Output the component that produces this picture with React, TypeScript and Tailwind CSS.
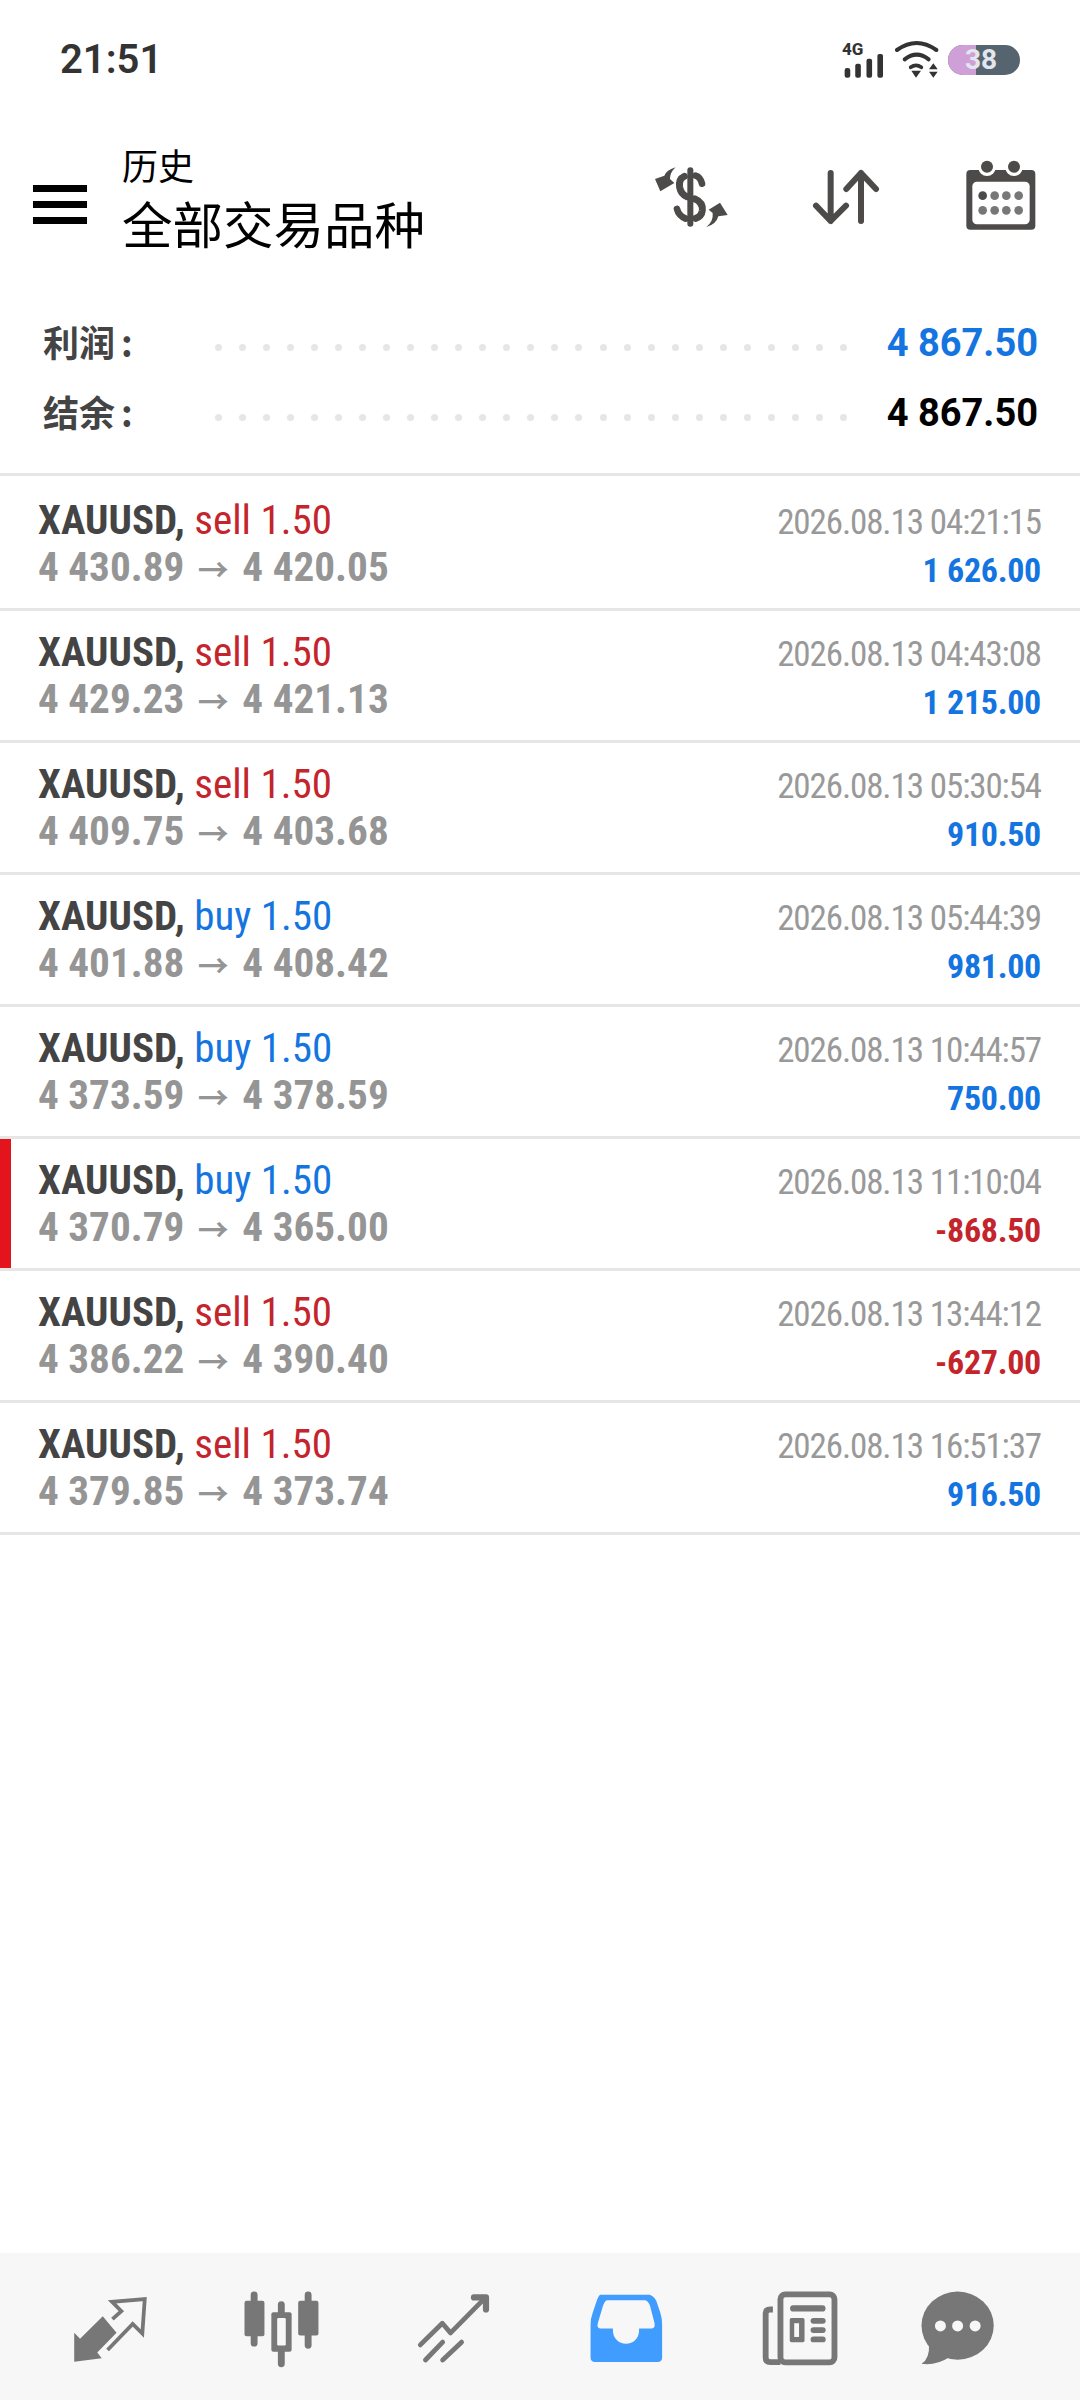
const trades = [
  { side: 'sell', open: '4 430.89', close: '4 420.05', time: '2026.08.13 04:21:15', profit: '1 626.00' },
  { side: 'sell', open: '4 429.23', close: '4 421.13', time: '2026.08.13 04:43:08', profit: '1 215.00' },
  { side: 'sell', open: '4 409.75', close: '4 403.68', time: '2026.08.13 05:30:54', profit: '910.50' },
  { side: 'buy', open: '4 401.88', close: '4 408.42', time: '2026.08.13 05:44:39', profit: '981.00' },
  { side: 'buy', open: '4 373.59', close: '4 378.59', time: '2026.08.13 10:44:57', profit: '750.00' },
  { side: 'buy', open: '4 370.79', close: '4 365.00', time: '2026.08.13 11:10:04', profit: '-868.50', marked: true },
  { side: 'sell', open: '4 386.22', close: '4 390.40', time: '2026.08.13 13:44:12', profit: '-627.00' },
  { side: 'sell', open: '4 379.85', close: '4 373.74', time: '2026.08.13 16:51:37', profit: '916.50' },
];

const cjk = "font-['Noto_Sans_CJK_SC','Noto_Sans',sans-serif]";
const roboto = "font-['Roboto',sans-serif]";
const condensed = "font-['Roboto',sans-serif] [font-stretch:75%]";

function StatusBar() {
  return (
    <div className="h-[120px] pl-[60px] pr-[60px] pt-[37px] flex justify-between items-start">
      <span className={`${roboto} text-[40px] leading-[46px] font-semibold text-[#333]`}>21:51</span>
      <div className="h-[46px] flex items-center">
        <div className="relative w-[43px] h-[37px] mr-[9px]">
          <span className={`absolute left-0 top-[-3px] ${roboto} text-[17px] leading-[20px] font-extrabold text-[#333]`}>4G</span>
          <svg width="43" height="37" viewBox="65 65 130 110" className="absolute left-0 top-0">
            <rect x="73" y="143" width="17" height="29" rx="7" fill="#333" />
            <rect x="105" y="130" width="17" height="42" rx="6" fill="#333" />
            <rect x="139" y="115" width="17" height="57" rx="6" fill="#333" />
            <rect x="172" y="100" width="17" height="72" rx="6" fill="#333" />
          </svg>
        </div>
        <svg width="46" height="40" viewBox="222 60 138 120" className="mr-[8px]">
          <g fill="none" stroke="#333" strokeLinecap="round">
            <path d="M231 90 Q290 48 349 90" strokeWidth="12" />
            <path d="M254 118 Q290 90 326 118" strokeWidth="12" />
            <path d="M272 142 Q288 130 304 142" strokeWidth="11" />
          </g>
          <path d="M274 152 H303 L288 173Z M340 130 L353 148 H327Z M327 155 H353 L340 173Z" fill="#333" />
        </svg>
        <div className="w-[72px] h-[30px] rounded-full flex bg-[#56646f] relative">
          <div className="w-[28px] rounded-l-full bg-[#cf9fd8]" />
          <span className={`absolute left-[17px] top-0 ${roboto} text-[28px] leading-[30px] font-bold text-[#e4e6ee]`}>38</span>
        </div>
      </div>
    </div>
  );
}

function DollarIcon() {
  return (
    <svg width="80" height="80" viewBox="150 480 240 240">
      <g fill="none" stroke="#4d4a4a" strokeLinecap="round">
        <path d="M268 514 V674" strokeWidth="18" />
        <path d="M250 532 Q232 540 236 565 Q240 586 258 593" strokeWidth="21" />
        <path d="M284 530 Q298 534 303 554" strokeWidth="20" />
        <path d="M282 600 Q306 610 304 634 Q302 652 284 658" strokeWidth="21" />
        <path d="M228 630 Q233 650 254 659" strokeWidth="20" />
      </g>
      <path d="M224 505 Q198 512 190 530 L162 540 L178 577 L220 552 L207 540 Q207 520 224 505Z" fill="#4d4a4a" />
      <path d="M316 684 Q345 677 352 652 L380 648 L357 611 L323 632 L335 642 Q338 666 316 684Z" fill="#4d4a4a" />
    </svg>
  );
}

function SortIcon() {
  return (
    <svg width="80" height="80" viewBox="618 480 240 240">
      <g fill="none" stroke="#4d4a4a" strokeWidth="18" strokeLinecap="round" strokeLinejoin="round">
        <path d="M692 522 V666 M648 620 L692 666 L738 620" />
        <path d="M783 666 V522 M739 570 L783 522 L828 570" />
      </g>
    </svg>
  );
}

function CalendarIcon() {
  return (
    <svg width="80" height="80" viewBox="1082 480 240 240">
      <rect x="1098" y="513" width="207" height="179" rx="12" fill="#4d4a4a" />
      <rect x="1116" y="548" width="172" height="128" rx="14" fill="#fff" />
      <circle cx="1160" cy="505" r="26" fill="#fff" />
      <circle cx="1241" cy="505" r="26" fill="#fff" />
      <circle cx="1160" cy="503" r="18" fill="#4d4a4a" />
      <circle cx="1241" cy="503" r="18" fill="#4d4a4a" />
      {[590, 634].map((y) =>
        [1147, 1183, 1218, 1255].map((x) => (
          <circle key={`${x}-${y}`} cx={x} cy={y} r="13" fill={x === 1147 && y === 590 ? '#4d4a4a' : '#777'} />
        ))
      )}
    </svg>
  );
}

function Header() {
  return (
    <div className="h-[170px] flex items-start relative">
      <div className="ml-[33px] mt-[65px] w-[54px] flex flex-col gap-[9px]">
        <div className="h-[7px] bg-black" />
        <div className="h-[7px] bg-black" />
        <div className="h-[7px] bg-black" />
      </div>
      <div className={`${cjk} ml-[35px] text-black`}>
        <div className="text-[36px] leading-[44px] mt-[22px]">历史</div>
        <div className="text-[50.5px] leading-[60px] mt-[6px]">全部交易品种</div>
      </div>
      <div className="absolute left-[651px] top-[39px]">
        <DollarIcon />
      </div>
      <div className="absolute left-[806px] top-[39px]">
        <SortIcon />
      </div>
      <div className="absolute left-[961px] top-[39px]">
        <CalendarIcon />
      </div>
    </div>
  );
}

function SummaryRow({ label, value, color }: { label: string; value: string; color: string }) {
  return (
    <div className="h-[70px] flex items-center pl-[43px] pr-[42px]">
      <span className={`${cjk} w-[172px] mb-[5px] text-[36px] font-bold text-[#444] whitespace-nowrap`}>
        {label}
        <span className="ml-[6px]">:</span>
      </span>
      <div className="w-[632px] flex justify-between mt-[8px]">
        {Array.from({ length: 27 }).map((_, i) => (
          <span key={i} className="w-[7px] h-[7px] rounded-full bg-[#e6e6e6]" />
        ))}
      </div>
      <span className={`${roboto} ml-auto text-[38px] font-bold ${color}`}>{value}</span>
    </div>
  );
}

function TradeRow({ trade, first }: { trade: (typeof trades)[number]; first: boolean }) {
  const isBuy = trade.side === 'buy';
  const negative = trade.profit.startsWith('-');
  return (
    <div
      className={`${first ? 'h-[135px] pt-[19px]' : 'h-[132px] pt-[16px]'} border-b-[3px] border-[#e6e6e6] relative flex justify-between pl-[38px] pr-[39px]`}
    >
      {trade.marked && <div className="absolute left-0 top-0 bottom-0 w-[11px] bg-[#e3141c]" />}
      <div className={condensed}>
        <div className="text-[41px] leading-[50px] text-[#444] font-bold whitespace-nowrap">
          XAUUSD,{' '}
          <span className={`font-normal ${isBuy ? 'text-[#1475e0]' : 'text-[#c4242c]'}`}>
            {trade.side} 1.50
          </span>
        </div>
        <div className="text-[41.2px] leading-[44px] text-[#959595] font-bold whitespace-nowrap">
          {trade.open}{' '}
          <span className="font-['Noto_Sans_CJK_SC',sans-serif] text-[31px] leading-[0] mx-[4px]">→</span> {trade.close}
        </div>
      </div>
      <div className={`${condensed} text-right`}>
        <div className="text-[35px] leading-[48px] mt-[4px] tracking-[-1.1px] text-[#999] whitespace-nowrap">{trade.time}</div>
        <div className={`text-[34px] leading-[44px] mt-[1px] tracking-[-0.3px] font-bold ${negative ? 'text-[#c4242c]' : 'text-[#1475e0]'}`}>
          {trade.profit}
        </div>
      </div>
    </div>
  );
}

function BottomNav() {
  return (
    <div className="mt-auto h-[147px] bg-[#f7f7f7] px-[24px] grid grid-cols-6 items-center justify-items-center">
      <svg width="86" height="86" viewBox="194 126 250 250">
        <path d="M215 268 V352 L295 342 L282 325 L338 268 L298 220 L232 285Z" fill="#777" />
        <path d="M326 228 L352 205 L325 178 L420 170 L413 270 L385 242 L312 318" fill="none" stroke="#777" strokeWidth="11" />
      </svg>
      <svg width="86" height="86" viewBox="694 126 250 250">
        <g stroke="#777" strokeWidth="20" strokeLinecap="round">
          <path d="M738 158 V298 M817 186 V358 M895 158 V304" />
        </g>
        <rect x="710" y="175" width="58" height="103" rx="6" fill="#777" />
        <rect x="788" y="208" width="59" height="115" rx="6" fill="#777" />
        <rect x="805" y="225" width="25" height="80" rx="4" fill="#f7f7f7" />
        <rect x="866" y="175" width="59" height="101" rx="6" fill="#777" />
      </svg>
      <svg width="86" height="86" viewBox="1193 126 250 250">
        <g fill="none" stroke="#777" strokeLinecap="round" strokeLinejoin="round">
          <path d="M1220 303 L1284 240 L1308 268 L1400 175" strokeWidth="14" />
          <path d="M1376 165 H1411 V200" strokeWidth="18" />
          <path d="M1235 347 L1285 295 M1285 347 L1340 295" strokeWidth="14" />
        </g>
      </svg>
      <svg width="86" height="86" viewBox="125 126 250 250">
        <path d="M175 157 H318 Q330 160 338 175 L350 210 Q355 225 355 245 V340 Q355 353 342 353 H160 Q147 353 147 340 V245 Q147 225 153 210 L165 175 Q170 160 175 157Z" fill="#409cff" />
        <path d="M195 173 H305 Q315 175 320 190 L333 240 Q335 255 325 255 H288 V262 A38 38 0 0 1 212 262 V255 H175 Q165 255 168 240 L183 190 Q188 175 195 173Z" fill="#f7f7f7" />
      </svg>
      <svg width="86" height="86" viewBox="624 126 250 250">
        <g fill="none" stroke="#777" strokeWidth="17">
          <rect x="698" y="156" width="157" height="198" rx="14" />
          <path d="M676 200 H668 Q655 200 655 212 V340 Q655 353 668 353 H698" />
        </g>
        <g stroke="#777" strokeWidth="18" strokeLinecap="round">
          <path d="M735 197 H820" />
          <path d="M794 233 H821 M794 260 H821 M794 287 H821" strokeWidth="17" />
        </g>
        <rect x="725" y="225" width="43" height="70" rx="5" fill="#777" />
        <rect x="738" y="240" width="14" height="40" fill="#f7f7f7" />
      </svg>
      <svg width="86" height="86" viewBox="1124 126 250 250" className="overflow-visible">
        <ellipse cx="1213" cy="247" rx="105" ry="99" fill="#777" />
        <path d="M1130 300 Q1132 345 1108 358 Q1150 364 1190 338Z" fill="#777" />
        <circle cx="1163" cy="248" r="16" fill="#f7f7f7" />
        <circle cx="1213" cy="248" r="16" fill="#f7f7f7" />
        <circle cx="1264" cy="248" r="16" fill="#f7f7f7" />
      </svg>
    </div>
  );
}

export default function App() {
  return (
    <div className="w-[1080px] h-[2400px] bg-white flex flex-col overflow-hidden">
      <StatusBar />
      <Header />
      <div className="pt-[18px] pb-[25px]">
        <SummaryRow label="利润" value="4 867.50" color="text-[#1475e0]" />
        <SummaryRow label="结余" value="4 867.50" color="text-black" />
      </div>
      <div className="border-t-[3px] border-[#e6e6e6]">
        {trades.map((trade, i) => (
          <TradeRow key={trade.time} trade={trade} first={i === 0} />
        ))}
      </div>
      <BottomNav />
    </div>
  );
}
